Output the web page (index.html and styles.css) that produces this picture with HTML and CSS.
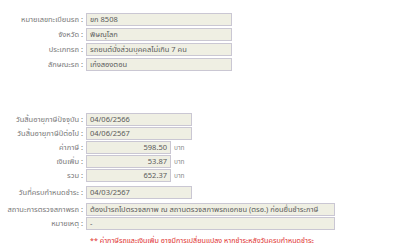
FILE: index.html
```html
<!DOCTYPE html>
<html lang="th">
  <head>
    <meta charset="UTF-8" />
    <meta name="viewport" content="width=device-width, initial-scale=1.0" />
    <title>ตรวจสอบภาษีรถ</title>
    <link rel="stylesheet" href="styles.css">
  </head>
  <body>
    <div class="main">
      <div class="group">
        <div class="row">
          <label class="lbl">หมายเลขทะเบียนรถ :</label>
          <div class="box wide">ขก 8508</div>
        </div>
        <div class="row">
          <label class="lbl">จังหวัด :</label>
          <div class="box wide">พิษณุโลก</div>
        </div>
        <div class="row">
          <label class="lbl">ประเภทรถ :</label>
          <div class="box wide">รถยนต์นั่งส่วนบุคคลไม่เกิน 7 คน</div>
        </div>
        <div class="row">
          <label class="lbl">ลักษณะรถ :</label>
          <div class="box wide">เก๋งสองตอน</div>
        </div>
      </div>

      <div class="group tax">
        <div class="row">
          <label class="lbl">วันสิ้นอายุภาษีปัจจุบัน :</label>
          <div class="box date">04/06/2566</div>
        </div>
        <div class="row">
          <label class="lbl">วันสิ้นอายุภาษีปีต่อไป :</label>
          <div class="box date">04/06/2567</div>
        </div>
        <div class="row">
          <label class="lbl">ค่าภาษี :</label>
          <div class="box money">598.50</div>
          <span class="unit">บาท</span>
        </div>
        <div class="row">
          <label class="lbl">เงินเพิ่ม :</label>
          <div class="box money">53.87</div>
          <span class="unit">บาท</span>
        </div>
        <div class="row">
          <label class="lbl">รวม :</label>
          <div class="box money">652.37</div>
          <span class="unit">บาท</span>
        </div>
        <div class="row spaced">
          <label class="lbl">วันที่ครบกำหนดชำระ :</label>
          <div class="box date">04/03/2567</div>
        </div>
        <div class="row spaced">
          <label class="lbl">สถานะการตรวจสภาพรถ :</label>
          <div class="box long">ต้องนำรถไปตรวจสภาพ ณ สถานตรวจสภาพรถเอกชน (ตรอ.) ก่อนยื่นชำระภาษี</div>
        </div>
        <div class="row">
          <label class="lbl">หมายเหตุ :</label>
          <div class="box long">-</div>
        </div>
      </div>

      <p class="note">** ค่าภาษีรถและเงินเพิ่ม อาจมีการเปลี่ยนแปลง หากชำระหลังวันครบกำหนดชำระ</p>
    </div>
  </body>
</html>
```

FILE: styles.css
```css
* {
  padding: 0;
  margin: 0;
  box-sizing: border-box;
  font-family: Tahoma, "Noto Sans Thai", "Noto Sans", "DejaVu Sans", sans-serif;
}
body {
  background-color: white;
}
.main {
  width: 400px;
  padding-top: 13px;
}
.group {
  display: flex;
  flex-direction: column;
  gap: 2px;
}
.tax {
  margin-top: 42px;
  gap: 1px;
}
.row {
  display: flex;
  align-items: center;
  height: 13px;
}
.spaced {
  margin-top: 3px;
}
.lbl {
  width: 83px;
  margin-right: 3px;
  text-align: right;
  font-size: 7.5px;
  color: #777;
  white-space: nowrap;
}
.box {
  height: 13px;
  line-height: 11px;
  padding: 0 3px;
  font-size: 7.5px;
  color: #5a5a5a;
  background-color: #efefe3;
  border: 1px solid #cac7d3;
  white-space: nowrap;
  overflow: hidden;
}
.wide {
  width: 146px;
}
.date {
  width: 106px;
}
.money {
  width: 85px;
  text-align: right;
}
.long {
  width: 249px;
}
.unit {
  margin-left: 3px;
  font-size: 6.5px;
  color: #888;
}
.note {
  margin-top: 5px;
  margin-left: 90px;
  font-size: 7.2px;
  color: #e0302e;
}
```
